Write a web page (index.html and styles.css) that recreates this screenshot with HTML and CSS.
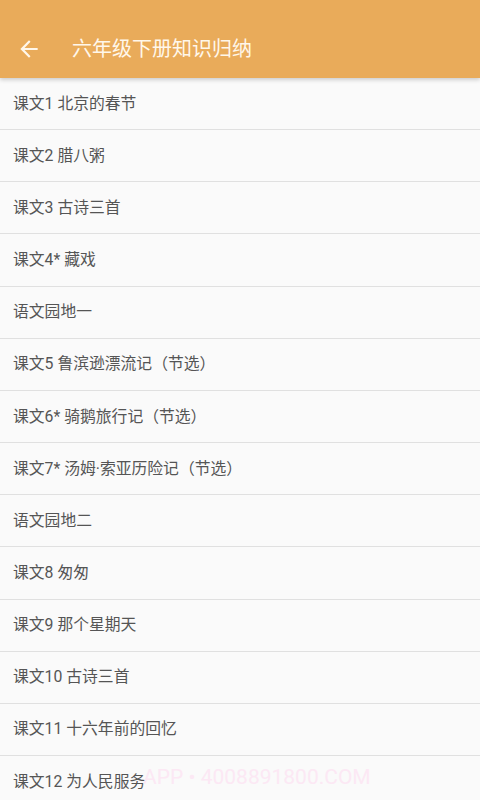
FILE: index.html
```html
<!DOCTYPE html>
<html lang="zh-CN">
<head>
    <meta charset="UTF-8">
    <meta name="viewport" content="width=device-width, initial-scale=1.0">
    <title>六年级下册知识归纳</title>
    <link rel="stylesheet" href="styles.css">
</head>
<body>
    <div class="toolbar">
        <a href="#" class="back-btn">
            <svg width="26" height="26" viewBox="0 0 24 24">
                <path d="M20 11H7.83l5.59-5.59L12 4l-8 8 8 8 1.41-1.41L7.83 13H20v-2z" fill="#fff7ea"/>
            </svg>
        </a>
        <h1>六年级下册知识归纳</h1>
    </div>

    <ul class="lesson-list">
        <li>课文1 北京的春节</li>
        <li>课文2 腊八粥</li>
        <li>课文3 古诗三首</li>
        <li>课文4* 藏戏</li>
        <li>语文园地一</li>
        <li>课文5 鲁滨逊漂流记（节选）</li>
        <li>课文6* 骑鹅旅行记（节选）</li>
        <li>课文7* 汤姆·索亚历险记（节选）</li>
        <li>语文园地二</li>
        <li>课文8 匆匆</li>
        <li>课文9 那个星期天</li>
        <li>课文10 古诗三首</li>
        <li>课文11 十六年前的回忆</li>
        <li>课文12 为人民服务</li>
    </ul>

    <div class="watermark">APP • 4008891800.COM</div>
</body>
</html>
```

FILE: styles.css
```css
body {
    font-family: Roboto, "Noto Sans CJK SC", sans-serif;
    background: #fafafa;
    margin: 0;
    padding: 0;
    height: 800px;
    overflow: hidden;
    position: relative;
}

.toolbar {
    height: 78px;
    background: #e9ab5a;
    display: flex;
    align-items: flex-end;
    padding: 0 0 16px 16px;
    box-sizing: border-box;
    box-shadow: 0 2px 4px rgba(0, 0, 0, 0.18);
    position: relative;
    z-index: 1;
}

.back-btn {
    display: flex;
    width: 26px;
    height: 26px;
    align-items: center;
}

.toolbar h1 {
    margin: 0 0 1px 30px;
    font-size: 20px;
    font-weight: normal;
    color: #fff7ea;
    line-height: 24px;
}

.lesson-list {
    list-style: none;
    margin: 0;
    padding: 0;
}

.lesson-list li {
    height: 52.17px;
    box-sizing: border-box;
    padding: 0 0 3px 13px;
    display: flex;
    align-items: center;
    font-size: 15.8px;
    color: #555;
    border-bottom: 1px solid #e0e0e0;
}

.watermark {
    position: absolute;
    left: 143px;
    top: 765px;
    font-size: 21px;
    color: #fce8f4;
    white-space: nowrap;
}
```
